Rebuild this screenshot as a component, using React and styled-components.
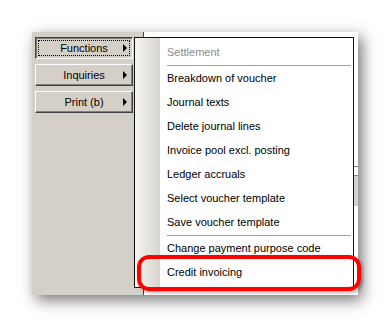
import React from "react";
import styled, { createGlobalStyle, css } from "styled-components";

const Global = createGlobalStyle`
  html, body { margin: 0; padding: 0; background: #fff; }
  body { font-family: "Liberation Sans", Arial, sans-serif; font-size: 11px; }
`;

const Page = styled.div`
  width: 390px;
  height: 327px;
  box-sizing: border-box;
  padding: 32px 0 0 32px;
  overflow: hidden;
`;

const Frame = styled.div`
  position: relative;
  width: 326px;
  height: 263px;
  display: grid;
  grid-template-columns: 112px 1fr;
  box-shadow: 4px 5px 14px rgba(0, 0, 0, 0.55);
`;

const Panel = styled.div`
  background: #d4d0c8;
  border-right: 1px solid #404040;
  display: flex;
  flex-direction: column;
  gap: 5px;
  padding: 5px 0 0 3px;
`;

const Pane = styled.div`
  background: #fff;
  display: flex;
  flex-direction: column;
  align-items: flex-end;
  padding-top: 134px;
`;

const PeekTick = styled.div`
  width: 4px;
  height: 10px;
  box-sizing: border-box;
  border-top: 1px solid #808080;
  border-bottom: 1px solid #808080;
`;

const PeekBody = styled.div`
  width: 4px;
  height: 30px;
  background: #d4d0c8;
`;

const Button = styled.div`
  width: 98px;
  height: 22px;
  box-sizing: border-box;
  display: grid;
  grid-template-columns: 1fr auto 1fr;
  align-items: center;
  color: #000;
  font-size: 11px;
  background: #d4d0c8;
  border: 1px solid;
  ${(p) =>
    p.$pressed
      ? css`
          border-color: #404040 #fff #fff #404040;
          box-shadow: inset 1px 1px #808080;
          outline: 1px dotted #000;
          outline-offset: -4px;
        `
      : css`
          border-color: #fff #404040 #404040 #fff;
          box-shadow: inset -1px -1px #808080;
        `}
`;

const Label = styled.span`
  grid-column: 2;
  white-space: nowrap;
`;

const Arrow = styled.span`
  grid-column: 3;
  justify-self: end;
  margin-right: 5px;
  width: 0;
  height: 0;
  border-left: 4px solid #000;
  border-top: 4px solid transparent;
  border-bottom: 4px solid transparent;
`;

const Menu = styled.div`
  position: absolute;
  left: 102px;
  top: 5px;
  width: 220px;
  box-sizing: border-box;
  border: 1px solid #111;
  padding: 2px 0 3px;
  background-color: #fff;
  background-image: linear-gradient(to right, #f6f5f2, #d8d5ce);
  background-size: 25px 100%;
  background-repeat: no-repeat;
`;

const Item = styled.div`
  height: 24px;
  line-height: 24px;
  padding-left: 32px;
  font-size: 11px;
  white-space: nowrap;
  color: ${(p) => (p.$disabled ? "#8a8a8a" : "#000")};
`;

const Separator = styled.div`
  height: 1px;
  margin: 1px 2px 0 32px;
  background: #a0a0a0;
`;

const Highlight = styled.div`
  position: absolute;
  left: 105px;
  top: 223px;
  width: 224px;
  height: 36px;
  box-sizing: border-box;
  border: 4px solid #f00;
  border-radius: 12px;
  box-shadow: 2px 2px 3px rgba(0, 0, 0, 0.3);
`;

const buttons = [
  { label: "Functions", pressed: true },
  { label: "Inquiries" },
  { label: "Print (b)" },
];

const groups = [
  [{ label: "Settlement", disabled: true }],
  [
    { label: "Breakdown of voucher" },
    { label: "Journal texts" },
    { label: "Delete journal lines" },
    { label: "Invoice pool excl. posting" },
    { label: "Ledger accruals" },
    { label: "Select voucher template" },
    { label: "Save voucher template" },
  ],
  [{ label: "Change payment purpose code" }, { label: "Credit invoicing" }],
];

export default function App() {
  return (
    <>
      <Global />
      <Page>
        <Frame>
          <Panel>
            {buttons.map((b) => (
              <Button key={b.label} $pressed={b.pressed}>
                <Label>{b.label}</Label>
                <Arrow />
              </Button>
            ))}
          </Panel>
          <Pane>
            <PeekTick />
            <PeekBody />
          </Pane>
          <Menu>
            {groups.map((g, gi) => (
              <React.Fragment key={gi}>
                {gi > 0 && <Separator />}
                {g.map((it) => (
                  <Item key={it.label} $disabled={it.disabled}>
                    {it.label}
                  </Item>
                ))}
              </React.Fragment>
            ))}
          </Menu>
          <Highlight />
        </Frame>
      </Page>
    </>
  );
}
